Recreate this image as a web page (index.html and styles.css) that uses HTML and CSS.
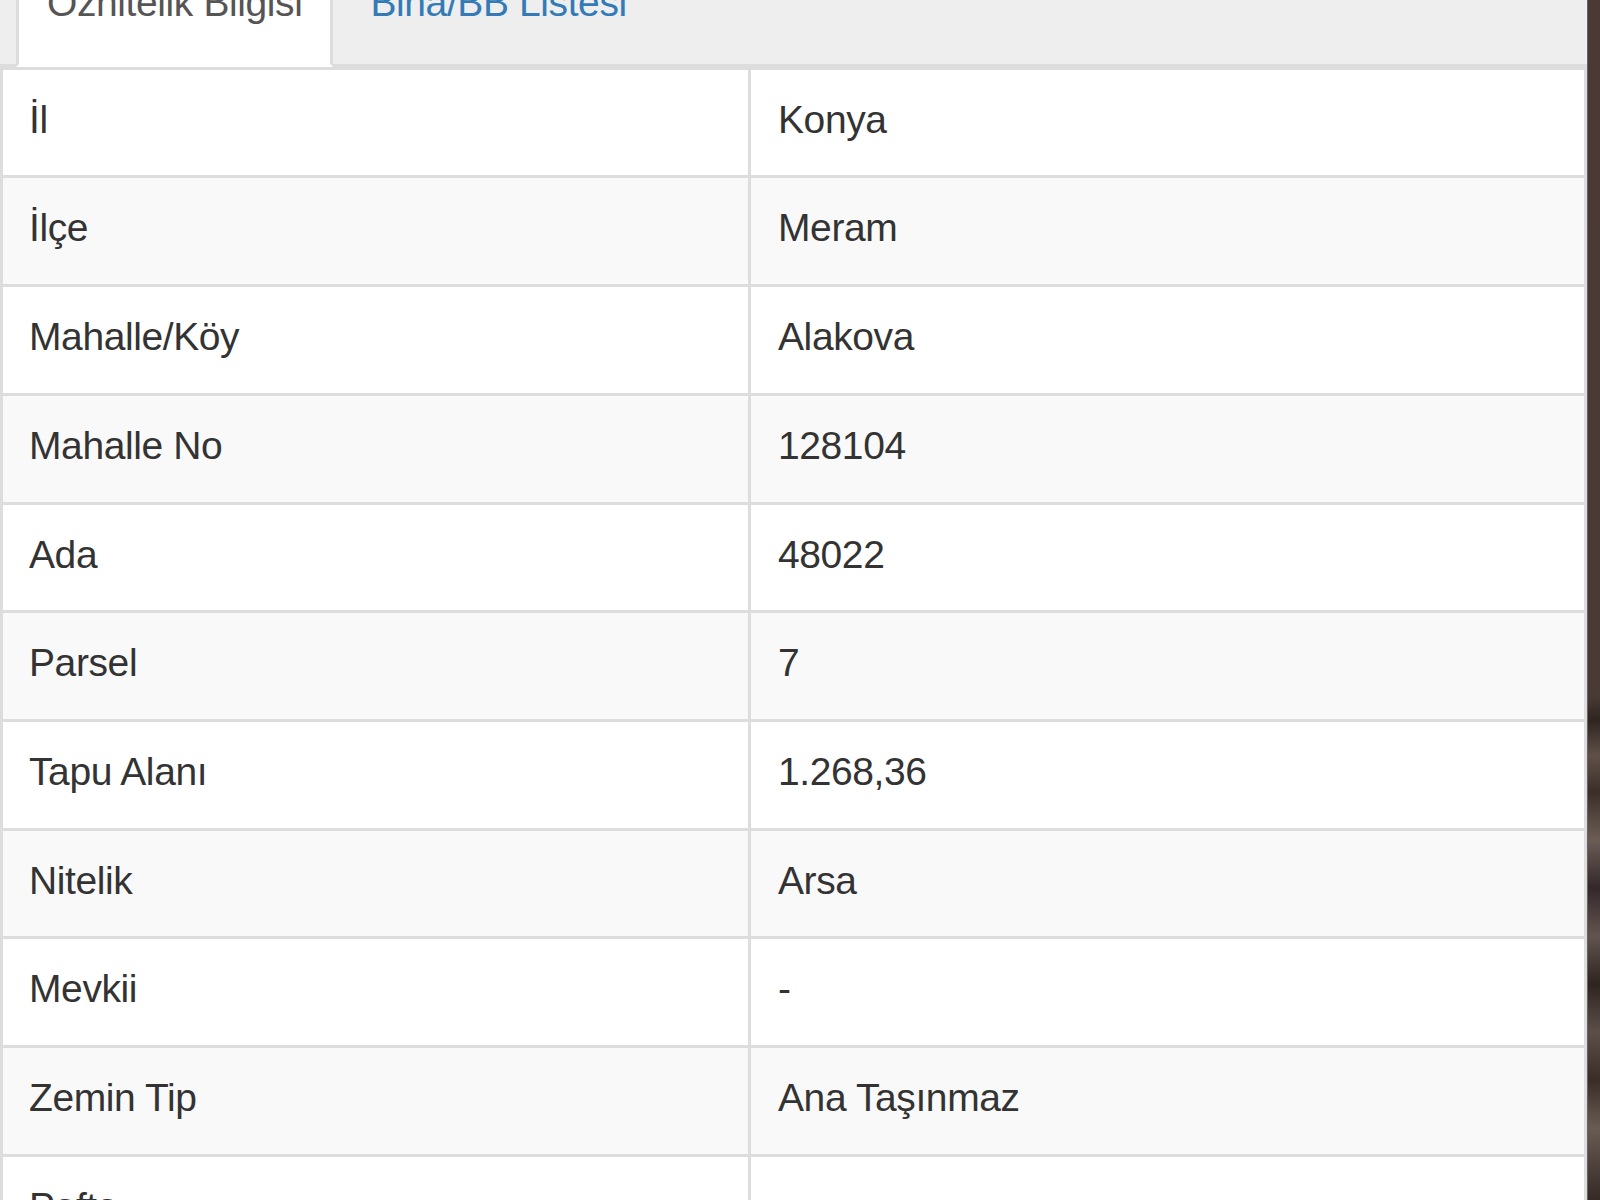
FILE: index.html
```html
<!DOCTYPE html>
<html lang="tr">
<head>
    <meta charset="UTF-8">
    <meta name="viewport" content="width=device-width, initial-scale=1.0">
    <title>Parsel Sorgu</title>
    <link rel="stylesheet" href="styles.css">
</head>
<body>
    <div class="panel">
        <ul class="nav-tabs">
            <li class="active"><a href="#oznitelik">Öznitelik Bilgisi</a></li>
            <li><a href="#bina">Bina/BB Listesi</a></li>
        </ul>

        <table class="info-table">
            <tbody>
                <tr><td class="key">İl</td><td>Konya</td></tr>
                <tr><td class="key">İlçe</td><td>Meram</td></tr>
                <tr><td class="key">Mahalle/Köy</td><td>Alakova</td></tr>
                <tr><td class="key">Mahalle No</td><td>128104</td></tr>
                <tr><td class="key">Ada</td><td>48022</td></tr>
                <tr><td class="key">Parsel</td><td>7</td></tr>
                <tr><td class="key">Tapu Alanı</td><td>1.268,36</td></tr>
                <tr><td class="key">Nitelik</td><td>Arsa</td></tr>
                <tr><td class="key">Mevkii</td><td>-</td></tr>
                <tr><td class="key">Zemin Tip</td><td>Ana Taşınmaz</td></tr>
                <tr><td class="key">Pafta</td><td>-</td></tr>
            </tbody>
        </table>
    </div>

    <!-- arka plandaki fotoğrafın kenarı -->
    <div class="edge"></div>
</body>
</html>
```

FILE: styles.css
```css
body {
    font-family: 'Liberation Sans', Arial, sans-serif;
    font-size: 39px;
    letter-spacing: -0.4px;
    line-height: 55.7px;
    color: #333;
    background: #46362f;
    margin: 0;
    display: flex;
    height: 1200px;
    overflow: hidden;
}

.panel {
    width: 1587px;
    flex-shrink: 0;
    background: #fff;
}

.edge {
    flex: 1;
    border-left: 1px solid #6d615c;
    background: linear-gradient(180deg, #4a3934 0%, #4a3a35 58%, #2f2420 60%, #5f5049 63%, #3b2e29 66%, #6b5d56 70%, #34282a 74%, #625550 78%, #2e2420 82%, #5c4f49 86%, #3a2d28 90%, #695b54 94%, #352a26 100%);
}

/* sekmeler */
.nav-tabs {
    list-style: none;
    margin: -57px 0 0 0;
    padding: 0 0 0 16px;
    display: flex;
    background: #eee;
    border-bottom: 3px solid #ddd;
}

.nav-tabs li {
    margin-right: 6px;
    margin-bottom: -3px;
}

.nav-tabs a {
    display: block;
    padding: 29px 28px 33px 28px;
    border: 3px solid transparent;
    color: #337ab7;
    text-decoration: none;
}

.nav-tabs .active a {
    color: #555;
    background: #fff;
    border-color: #ddd #ddd transparent #ddd;
}

/* öznitelik tablosu */
.info-table {
    width: 100%;
    table-layout: fixed;
    border-collapse: separate;
    border-spacing: 0;
    border: 3px solid #ddd;
    border-bottom: none;
}

.info-table td {
    padding: 22px 25px 28px 27px;
    vertical-align: top;
    border-top: 3px solid #ddd;
}

.info-table tr:first-child td {
    border-top: none;
}

.info-table tr:nth-child(even) td {
    background: #f9f9f9;
}

.info-table td.key {
    box-sizing: border-box;
    width: 748px;
    padding-left: 26px;
    border-right: 3px solid #ddd;
}
```
